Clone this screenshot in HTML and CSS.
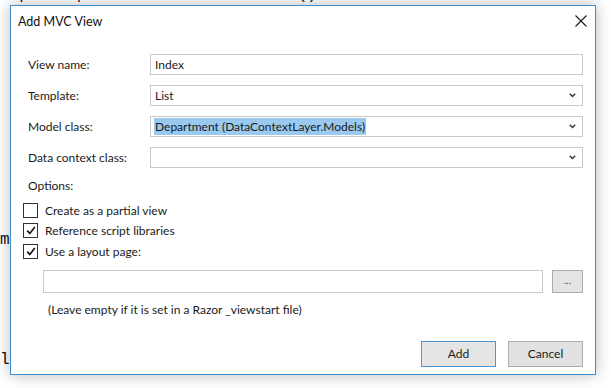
FILE: index.html
```html
<!DOCTYPE html>
<html lang="en">
<head>
	<meta charset="UTF-8">
	<title>Add MVC View</title>
	<link rel="stylesheet" href="styles.css">
</head>
<body>
	<!-- code editor behind the dialog -->
	<div class="editor">
		<div class="line cut">  p     p                      ()</div>
		<div class="line"></div>
		<div class="line"></div>
		<div class="line"></div>
		<div class="line"></div>
		<div class="line"></div>
		<div class="line"></div>
		<div class="line"></div>
		<div class="line"></div>
		<div class="line"></div>
		<div class="line"></div>
		<div class="line"></div>
		<div class="line">m</div>
		<div class="line"></div>
		<div class="line"></div>
		<div class="line"></div>
		<div class="line"></div>
		<div class="line"></div>
		<div class="line">l</div>
	</div>

	<div class="dialog">
		<div class="titlebar">
			<span class="title">Add MVC View</span>
			<span class="close">
				<svg width="12" height="12" viewBox="0 0 12 12"><path d="M0.5 0.5 L11.5 11.5 M11.5 0.5 L0.5 11.5" stroke="#1a1a1a" stroke-width="1.1" fill="none"/></svg>
			</span>
		</div>

		<div class="form">
			<div class="row">
				<label class="label">View name:</label>
				<div class="field">Index</div>
			</div>
			<div class="row">
				<label class="label">Template:</label>
				<div class="field select">
					<span>List</span>
					<svg class="chev" width="7" height="5" viewBox="0 0 7 5"><path d="M0.8 0.8 L3.5 3.6 L6.2 0.8" stroke="#333" stroke-width="1.4" fill="none"/></svg>
				</div>
			</div>
			<div class="row">
				<label class="label">Model class:</label>
				<div class="field select">
					<span class="selected">Department (DataContextLayer.Models)</span>
					<svg class="chev" width="7" height="5" viewBox="0 0 7 5"><path d="M0.8 0.8 L3.5 3.6 L6.2 0.8" stroke="#333" stroke-width="1.4" fill="none"/></svg>
				</div>
			</div>
			<div class="row">
				<label class="label">Data context class:</label>
				<div class="field select">
					<span></span>
					<svg class="chev" width="7" height="5" viewBox="0 0 7 5"><path d="M0.8 0.8 L3.5 3.6 L6.2 0.8" stroke="#333" stroke-width="1.4" fill="none"/></svg>
				</div>
			</div>

			<div class="options-label">Options:</div>

			<div class="checks">
				<div class="check">
					<span class="box"></span>
					<span>Create as a partial view</span>
				</div>
				<div class="check">
					<span class="box"><svg width="10" height="9" viewBox="0 0 10 9"><path d="M1.2 4.6 L3.8 7.4 L8.8 1" stroke="#111" stroke-width="1.6" fill="none"/></svg></span>
					<span>Reference script libraries</span>
				</div>
				<div class="check">
					<span class="box"><svg width="10" height="9" viewBox="0 0 10 9"><path d="M1.2 4.6 L3.8 7.4 L8.8 1" stroke="#111" stroke-width="1.6" fill="none"/></svg></span>
					<span>Use a layout page:</span>
				</div>
			</div>

			<div class="path-row">
				<div class="field path"></div>
				<div class="browse">...</div>
			</div>
			<div class="note">(Leave empty if it is set in a Razor _viewstart file)</div>

			<div class="buttons">
				<div class="btn default">Add</div>
				<div class="btn">Cancel</div>
			</div>
		</div>
	</div>
</body>
</html>
```

FILE: styles.css
```css
*{padding: 0;margin: 0;box-sizing: border-box;}
body{
	width: 611px;
	height: 388px;
	overflow: hidden;
	position: relative;
	background-color: #fff;
}

.editor{
	margin-top: -10px;
	font-family: "Liberation Mono", monospace;
	font-size: 16px;
	color: #111;
}
.editor .line{
	height: 20px;
	line-height: 20px;
	white-space: pre;
}
.editor .line.cut{
	line-height: 11px;
}

.dialog{
	position: absolute;
	left: 10px;
	top: 5px;
	width: 586px;
	height: 370px;
	background-color: #fff;
	border: 1px solid #3b8fd0;
	box-shadow: 0 0 14px rgba(0,0,0,0.28);
	font-family: "Lato", sans-serif;
	font-size: 12px;
	color: #1a1a1a;
}

.titlebar{
	height: 30px;
	display: flex;
	align-items: center;
	justify-content: space-between;
	padding: 0 7px 0 7px;
}
.titlebar .title{
	font-size: 12.5px;
	color: #111;
}
.titlebar .close{
	display: flex;
	margin-right: 1px;
}

.form{
	padding: 18px 12px 0 17px;
}
.row{
	display: flex;
	align-items: center;
	height: 21px;
	margin-bottom: 10px;
}
.label{
	width: 122px;
}
.field{
	flex: 1;
	height: 21px;
	border: 1px solid #c9c9c9;
	padding-left: 4px;
	display: flex;
	align-items: center;
	justify-content: space-between;
}
.select{
	padding-right: 6px;
}
.select .chev{
	flex-shrink: 0;
}
.selected{
	background-color: #99c9ef;
	padding: 1px 1px;
	margin-left: -1px;
}

.options-label{
	height: 16px;
	line-height: 16px;
	margin-bottom: 6px;
}

.checks{
	margin-left: -5px;
}
.check{
	display: flex;
	align-items: center;
	height: 20.5px;
}
.check .box{
	width: 15px;
	height: 15px;
	border: 1px solid #333;
	margin-right: 7px;
	display: flex;
	align-items: center;
	justify-content: center;
}

.path-row{
	display: flex;
	height: 23px;
	margin-top: 8px;
	padding-left: 15px;
}
.path-row .path{
	flex: none;
	width: 500px;
	height: 23px;
}
.browse{
	margin-left: 9px;
	width: 32px;
	height: 23px;
	border: 1px solid #adadad;
	background-color: #e4e4e4;
	display: flex;
	align-items: center;
	justify-content: center;
	font-size: 10px;
	color: #444;
	padding-bottom: 2px;
}

.note{
	margin-top: 9px;
	padding-left: 20px;
	height: 16px;
	line-height: 16px;
}

.buttons{
	display: flex;
	justify-content: flex-end;
	margin-top: 23px;
	gap: 12px;
}
.btn{
	width: 75px;
	height: 26px;
	border: 1px solid #adadad;
	background-color: #e1e1e1;
	display: flex;
	align-items: center;
	justify-content: center;
}
.btn.default{
	border-color: #4a95d8;
	background-color: #e5e5e5;
}
```
